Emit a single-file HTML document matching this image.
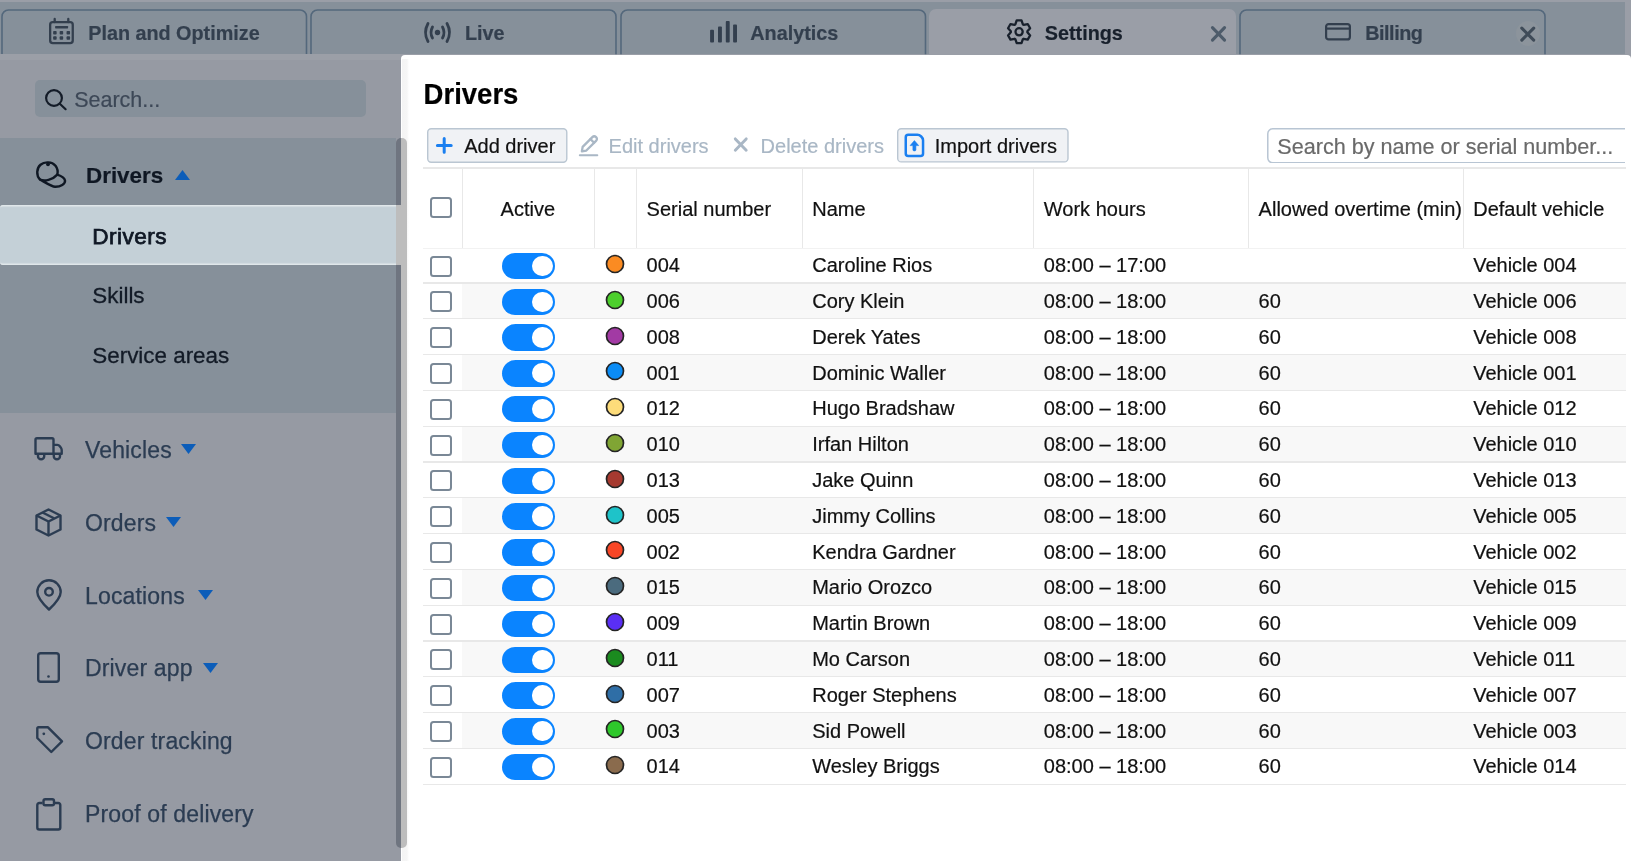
<!DOCTYPE html>
<html><head><meta charset="utf-8">
<style>
*{box-sizing:border-box;margin:0;padding:0}
html,body{width:1631px;height:861px;overflow:hidden}
body{will-change:transform;position:relative;background:#9a9ea7;font-family:"Liberation Sans",sans-serif;color:#000}
.abs{position:absolute}
.t{position:absolute;white-space:nowrap;line-height:1;-webkit-text-stroke:0.2px currentColor}
svg{overflow:visible}
</style></head><body>
<div class="abs" style="left:0.00px;top:1.50px;width:1625.00px;height:52.80px;background:#86909a"></div>
<svg class="abs" style="left:2.00px;top:0.00px;" width="304.5" height="55" viewBox="0 0 304.5 55"><path d="M0 54.3V16.5A6.5 6.5 0 0 1 6.5 10H298.0A6.5 6.5 0 0 1 304.5 16.5V54.3" fill="none" stroke="#54687c" stroke-width="1.6"/></svg>
<svg class="abs" style="left:311.00px;top:0.00px;" width="305" height="55" viewBox="0 0 305 55"><path d="M0 54.3V16.5A6.5 6.5 0 0 1 6.5 10H298.5A6.5 6.5 0 0 1 305 16.5V54.3" fill="none" stroke="#54687c" stroke-width="1.6"/></svg>
<svg class="abs" style="left:621.00px;top:0.00px;" width="304.5" height="55" viewBox="0 0 304.5 55"><path d="M0 54.3V16.5A6.5 6.5 0 0 1 6.5 10H298.0A6.5 6.5 0 0 1 304.5 16.5V54.3" fill="none" stroke="#54687c" stroke-width="1.6"/></svg>
<div class="abs" style="left:929.25px;top:8.75px;width:306.50px;height:45.55px;background:#9a9ea7;border-radius:7px 7px 0 0"></div>
<svg class="abs" style="left:1240.00px;top:0.00px;" width="305" height="55" viewBox="0 0 305 55"><path d="M0 54.3V16.5A6.5 6.5 0 0 1 6.5 10H298.5A6.5 6.5 0 0 1 305 16.5V54.3" fill="none" stroke="#54687c" stroke-width="1.6"/></svg>
<svg class="abs" style="left:44.00px;top:14.00px;" width="36" height="36" viewBox="0 0 36 36"><g fill="none" stroke="#333f4e" stroke-width="2.3" stroke-linecap="round"><rect x="6.15" y="8.05" width="22.6" height="21.1" rx="2.6"/><path d="M10.7 5V8M24.3 5V8"/></g><g fill="#333f4e"><rect x="11.1" y="11.9" width="13" height="2.5" rx="0.6"/><rect x="9.15" y="17.05" width="3.5" height="3.5" rx="0.8"/><rect x="15.65" y="17.05" width="3.5" height="3.5" rx="0.8"/><rect x="22.55" y="17.05" width="3.5" height="3.5" rx="0.8"/><rect x="9.15" y="22.35" width="3.5" height="3.5" rx="0.8"/><rect x="15.65" y="22.35" width="3.5" height="3.5" rx="0.8"/><rect x="22.55" y="22.35" width="3.5" height="3.5" rx="0.8"/></g></svg>
<div class="t" style="left:88.20px;top:24.00px;font-size:19.8px;color:#333f4e;font-weight:bold;">Plan and Optimize</div>
<svg class="abs" style="left:424.30px;top:21.50px;" width="27" height="21" viewBox="0 0 27 21"><g fill="none" stroke="#333f4e" stroke-width="2.8" stroke-linecap="round"><path d="M4 1.5 Q-1 10.5 4 19.5"/><path d="M23 1.5 Q28 10.5 23 19.5"/><path d="M8.5 5 Q5.5 10.5 8.5 16"/><path d="M18.5 5 Q21.5 10.5 18.5 16"/></g><circle cx="13.5" cy="10.5" r="2.7" fill="#333f4e"/></svg>
<div class="t" style="left:465.00px;top:24.00px;font-size:19.8px;color:#333f4e;font-weight:bold;">Live</div>
<svg class="abs" style="left:710.00px;top:21.30px;" width="27" height="21.5" viewBox="0 0 27 21.5"><g fill="#333f4e"><rect x="0.1" y="8.8" width="3.9" height="12.7" rx="0.9"/><rect x="8" y="5.4" width="3.9" height="16.1" rx="0.9"/><rect x="15.8" y="0" width="3.9" height="21.5" rx="0.9"/><rect x="23.1" y="3.4" width="3.9" height="18.1" rx="0.9"/></g></svg>
<div class="t" style="left:750.30px;top:24.00px;font-size:19.8px;color:#333f4e;font-weight:bold;">Analytics</div>
<svg class="abs" style="left:1005.50px;top:19.00px;" width="26" height="26" viewBox="0 0 26 26"><g fill="none" stroke="#18202c" stroke-width="2.3" stroke-linejoin="round"><path d="M9.33 5.40 L10.69 1.45 L15.51 1.45 L16.87 5.40 L17.62 5.84 L21.72 5.04 L24.13 9.22 L21.39 12.37 L21.39 13.23 L24.13 16.38 L21.72 20.56 L17.62 19.76 L16.87 20.20 L15.51 24.15 L10.69 24.15 L9.33 20.20 L8.58 19.76 L4.48 20.56 L2.07 16.38 L4.81 13.23 L4.81 12.37 L2.07 9.22 L4.48 5.04 L8.58 5.84Z"/><circle cx="13.1" cy="12.8" r="3.6"/></g></svg>
<div class="t" style="left:1044.80px;top:24.00px;font-size:19.8px;color:#18202c;font-weight:bold;">Settings</div>
<svg class="abs" style="left:1200.00px;top:18.00px;" width="40" height="32" viewBox="0 0 40 32"><path d="M12.45 9.65L24.55 22.15M24.55 9.65L12.45 22.15" stroke="#4d5b6a" stroke-width="3.1" stroke-linecap="round"/></svg>
<svg class="abs" style="left:1324.50px;top:23.00px;" width="26" height="17.5" viewBox="0 0 26 17.5"><g fill="none" stroke="#333f4e" stroke-width="2.2"><rect x="1.1" y="1.1" width="23.8" height="15.3" rx="2.5"/><path d="M1.1 5.6H24.9"/></g></svg>
<div class="t" style="left:1365.20px;top:24.00px;font-size:19.8px;color:#333f4e;font-weight:bold;letter-spacing:-0.45px">Billing</div>
<div class="abs" style="left:1515.50px;top:20.70px;width:24.50px;height:25.30px;background:#8c949c;border-radius:50%"></div>
<svg class="abs" style="left:1510.00px;top:18.00px;" width="40" height="32" viewBox="0 0 40 32"><path d="M11.8 10.2L23.7 22.1M23.7 10.2L11.8 22.1" stroke="#3f4b58" stroke-width="3.1" stroke-linecap="round"/></svg>
<div class="abs" style="left:0.00px;top:54.30px;width:401.00px;height:806.70px;background:#969aa3"></div>
<div class="abs" style="left:0.00px;top:54.30px;width:401.00px;height:6.20px;background:#9b9fa7"></div>
<div class="abs" style="left:34.50px;top:80.30px;width:331.00px;height:37.20px;background:#86909a;border-radius:5px"></div>
<svg class="abs" style="left:45.00px;top:88.70px;" width="22" height="21" viewBox="0 0 22 21"><g fill="none" stroke="#141c28" stroke-width="2.2" stroke-linecap="round"><circle cx="9" cy="9" r="7.9"/><path d="M14.8 14.8L20.6 20.2"/></g></svg>
<div class="t" style="left:74.20px;top:90.00px;font-size:21.5px;color:#3d4857;">Search...</div>
<div class="abs" style="left:0.00px;top:137.60px;width:396.30px;height:275.20px;background:#86909a"></div>
<svg class="abs" style="left:32.00px;top:156.00px;" width="40" height="36" viewBox="0 0 40 36"><g fill="none" stroke="#0f1723" stroke-width="2.4" stroke-linejoin="round" stroke-linecap="round"><path d="M8 23.5C4 19.5 4.5 12 8.5 8.7C12.5 5.3 20 5.5 23.5 9.8C25.5 12.5 26 16 25.3 18.6"/><path d="M8 23.5C12.5 25.5 20.5 24 25.3 18.6C29.5 20 32.5 22 33 24.5C33.5 28 28.5 31 23 30.8C20 30.7 18.5 29.5 8 23.5Z"/></g><circle cx="16" cy="8.3" r="1.9" fill="#0f1723"/></svg>
<div class="t" style="left:86.00px;top:165.00px;font-size:22.4px;color:#0f1723;font-weight:bold;">Drivers</div>
<svg class="abs" style="left:174.70px;top:170.00px;" width="15" height="10" viewBox="0 0 15 10"><path d="M7.5 0L15 10H0Z" fill="#0c5db9"/></svg>
<div class="abs" style="left:0.00px;top:204.80px;width:396.30px;height:60.40px;background:#c4d0d7;border-radius:3px 0 0 3px;box-shadow:inset 0 2.5px 1px -1px #e2e8eb,inset 0 -2.5px 1px -1px #e2e8eb"></div>
<div class="t" style="left:92.30px;top:226.00px;font-size:22.6px;color:#0f1724;letter-spacing:0.45px;-webkit-text-stroke:0.75px #0f1724">Drivers</div>
<div class="t" style="left:92.30px;top:285.00px;font-size:22.4px;color:#131b27;-webkit-text-stroke:0.3px #131b27">Skills</div>
<div class="t" style="left:92.30px;top:345.00px;font-size:22.4px;color:#131b27;-webkit-text-stroke:0.3px #131b27">Service areas</div>
<div class="abs" style="left:396.30px;top:137.90px;width:4.70px;height:710.10px;background:#6f7580;border-radius:5px 0 0 5px"></div>
<div class="abs" style="left:396.30px;top:204.80px;width:4.70px;height:60.40px;background:#bdbdbd"></div>
<div class="t" style="left:85.00px;top:439.00px;font-size:23px;color:#2b3c52;letter-spacing:0.15px;-webkit-text-stroke:0.25px #2b3c52">Vehicles</div>
<svg class="abs" style="left:181.00px;top:444.40px;" width="15" height="10" viewBox="0 0 15 10"><path d="M0 0H15L7.5 10Z" fill="#0c5db9"/></svg>
<div class="t" style="left:85.00px;top:512.00px;font-size:23px;color:#2b3c52;letter-spacing:0.15px;-webkit-text-stroke:0.25px #2b3c52">Orders</div>
<svg class="abs" style="left:166.00px;top:517.10px;" width="15" height="10" viewBox="0 0 15 10"><path d="M0 0H15L7.5 10Z" fill="#0c5db9"/></svg>
<div class="t" style="left:85.00px;top:585.00px;font-size:23px;color:#2b3c52;letter-spacing:0.15px;-webkit-text-stroke:0.25px #2b3c52">Locations</div>
<svg class="abs" style="left:198.00px;top:589.80px;" width="15" height="10" viewBox="0 0 15 10"><path d="M0 0H15L7.5 10Z" fill="#0c5db9"/></svg>
<div class="t" style="left:85.00px;top:657.00px;font-size:23px;color:#2b3c52;letter-spacing:0.15px;-webkit-text-stroke:0.25px #2b3c52">Driver app</div>
<svg class="abs" style="left:203.00px;top:662.60px;" width="15" height="10" viewBox="0 0 15 10"><path d="M0 0H15L7.5 10Z" fill="#0c5db9"/></svg>
<div class="t" style="left:85.00px;top:730.00px;font-size:23px;color:#2b3c52;letter-spacing:0.15px;-webkit-text-stroke:0.25px #2b3c52">Order tracking</div>
<div class="t" style="left:85.00px;top:803.00px;font-size:23px;color:#2b3c52;letter-spacing:0.15px;-webkit-text-stroke:0.25px #2b3c52">Proof of delivery</div>
<svg class="abs" style="left:30.00px;top:432.00px;" width="38" height="34" viewBox="0 0 38 34"><g fill="none" stroke="#2b3c52" stroke-width="2.4" stroke-linejoin="round"><path d="M7 6.3H22A1.5 1.5 0 0 1 23.5 7.8V21.7H5.5V7.8A1.5 1.5 0 0 1 7 6.3Z"/><path d="M23.5 12.9H27.3Q28.8 12.9 29.8 14.2L31 15.9Q31.7 16.9 31.7 18.2V21.7H23.5"/><path d="M8 21.7V24.2A3.1 3.1 0 0 0 14.2 24.2V21.7M23.8 21.7V24.2A3.1 3.1 0 0 0 30 24.2V21.7"/></g></svg>
<svg class="abs" style="left:35.40px;top:507.80px;" width="27" height="29" viewBox="0 0 27 29"><g fill="none" stroke="#2b3c52" stroke-width="2.4" stroke-linejoin="round"><path d="M13.5 1.5L25.5 7.5V21.5L13.5 27.5L1.5 21.5V7.5Z"/><path d="M1.5 7.5L13.5 13.5L25.5 7.5M13.5 13.5V27.5M7.5 4.5L19.5 10.5"/></g></svg>
<svg class="abs" style="left:36.30px;top:579.80px;" width="26" height="31" viewBox="0 0 26 31"><g fill="none" stroke="#2b3c52" stroke-width="2.4" stroke-linejoin="round"><path d="M13 29.5C6 23 1.3 17.5 1.3 12A11.7 11.7 0 0 1 24.7 12C24.7 17.5 20 23 13 29.5Z"/><circle cx="13" cy="11.8" r="3.8"/></g></svg>
<svg class="abs" style="left:37.30px;top:652.30px;" width="23" height="31" viewBox="0 0 23 31"><g fill="none" stroke="#2b3c52" stroke-width="2.4"><rect x="1.2" y="1.2" width="20.6" height="28.6" rx="2.5"/></g><circle cx="11.5" cy="24.5" r="1.3" fill="#2b3c52"/></svg>
<svg class="abs" style="left:35.90px;top:726.20px;" width="27.5" height="27.5" viewBox="0 0 27.5 27.5"><g fill="none" stroke="#2b3c52" stroke-width="2.4" stroke-linejoin="round"><path d="M1.3 2.3a1 1 0 0 1 1-1H12L26 15.3 15.3 26 1.3 12Z"/></g><circle cx="7.8" cy="7.8" r="1.4" fill="#2b3c52"/></svg>
<svg class="abs" style="left:35.90px;top:797.50px;" width="25.5" height="32" viewBox="0 0 25.5 32"><g fill="none" stroke="#2b3c52" stroke-width="2.4" stroke-linejoin="round"><path d="M6.5 5H3.3a2 2 0 0 0-2 2v22.5a2 2 0 0 0 2 2h19a2 2 0 0 0 2-2V7a2 2 0 0 0-2-2H19"/><rect x="7.5" y="1.2" width="10.5" height="6" rx="1.8"/></g></svg>
<div class="abs" style="left:401.00px;top:55.00px;width:1230.00px;height:808.50px;background:#fff;border-radius:4px"></div>
<div class="abs" style="left:402.00px;top:59.00px;width:7.00px;height:802.00px;background:linear-gradient(to right,#f4f4f4,#f6f6f6 70%,#fff)"></div>
<div class="abs" style="left:401.00px;top:137.90px;width:5.70px;height:710.10px;background:#bdbdbd;border-radius:0 5px 5px 0"></div>
<div class="t" style="left:423.60px;top:81.00px;font-size:27.5px;color:#000;font-weight:bold;transform:scaleY(1.07);transform-origin:0 23px">Drivers</div>
<svg class="abs" style="left:426.60px;top:127.70px;" width="140.5" height="34.9" viewBox="0 0 140.50 34.90"><rect x="0.7" y="0.7" width="139.10" height="33.50" rx="3.5" fill="#f0f2f5" stroke="#bac6d2" stroke-width="1.4"/></svg>
<svg class="abs" style="left:428.00px;top:128.00px;" width="34" height="34" viewBox="0 0 34 34"><g stroke="#1a7ff0" stroke-width="3" stroke-linecap="round"><path d="M16.2 10.4V24.2M9.4 17.4H23.2"/></g></svg>
<div class="t" style="left:464.20px;top:136.00px;font-size:20px;color:#111;">Add driver</div>
<svg class="abs" style="left:570.00px;top:128.00px;" width="40" height="34" viewBox="0 0 40 34"><g fill="none" stroke="#a9b7c5" stroke-width="2.3" stroke-linejoin="round" stroke-linecap="round"><path d="M11.9 23.3L12.66 18.86L22.36 9.16Q24.2 7.3 26.04 9.16Q27.9 11 26.04 12.84L16.34 22.54Z"/><path d="M20.5 11.1L24.1 14.7"/></g><path d="M9.8 27.3H27.3" stroke="#a9b7c5" stroke-width="2" stroke-linecap="round"/></svg>
<div class="t" style="left:608.60px;top:136.00px;font-size:20px;color:#a9b7c5;">Edit drivers</div>
<svg class="abs" style="left:725.00px;top:128.00px;" width="35" height="34" viewBox="0 0 35 34"><path d="M10.3 10.9L21.2 22.3M21.2 10.9L10.3 22.3" stroke="#a9b7c5" stroke-width="2.9" stroke-linecap="round"/></svg>
<div class="t" style="left:760.60px;top:136.00px;font-size:20px;color:#a9b7c5;">Delete drivers</div>
<svg class="abs" style="left:897.20px;top:127.90px;" width="171.7" height="34.6" viewBox="0 0 171.70 34.60"><rect x="0.7" y="0.7" width="170.30" height="33.20" rx="3.5" fill="#f0f2f5" stroke="#bac6d2" stroke-width="1.4"/></svg>
<svg class="abs" style="left:898.00px;top:128.00px;" width="34" height="34" viewBox="0 0 34 34"><path d="M10.25 6.75H19.4C22 6.75 25.05 9.6 25.05 12.2V25.45A2.5 2.5 0 0 1 22.55 27.95H10.25A2.5 2.5 0 0 1 7.75 25.45V9.25A2.5 2.5 0 0 1 10.25 6.75Z" fill="none" stroke="#1a7ff0" stroke-width="2.5" stroke-linejoin="round"/><path d="M16.4 12.6L20.7 17.6H17.9V21.9Q17.9 22.9 16.4 22.9Q14.9 22.9 14.9 21.9V17.6H12.1Z" fill="#1a7ff0" stroke="#1a7ff0" stroke-width="0.6" stroke-linejoin="round"/></svg>
<div class="t" style="left:934.70px;top:136.00px;font-size:20px;color:#111;">Import drivers</div>
<div class="abs" style="left:1267.3px;top:127.7px;width:358.2px;height:35.6px;overflow:hidden"><svg class="abs" style="left:0.00px;top:0.00px;" width="400.0" height="35.6" viewBox="0 0 400.00 35.60"><rect x="0.75" y="0.75" width="398.50" height="34.10" rx="5" fill="#fff" stroke="#b8c5d3" stroke-width="1.5"/></svg>
<div class="t" style="left:10.00px;top:8.00px;font-size:21.6px;color:#6a6a6a;">Search by name or serial number...</div>
</div>
<div class="abs" style="left:423.00px;top:167.30px;width:1202.50px;height:1.30px;background:#e8e8e8"></div>
<div class="abs" style="left:461.50px;top:168.60px;width:1.10px;height:80.00px;background:#e8e8e8"></div>
<div class="abs" style="left:594.00px;top:168.60px;width:1.10px;height:80.00px;background:#e8e8e8"></div>
<div class="abs" style="left:635.50px;top:168.60px;width:1.10px;height:80.00px;background:#e8e8e8"></div>
<div class="abs" style="left:801.90px;top:168.60px;width:1.10px;height:80.00px;background:#e8e8e8"></div>
<div class="abs" style="left:1032.50px;top:168.60px;width:1.10px;height:80.00px;background:#e8e8e8"></div>
<div class="abs" style="left:1247.50px;top:168.60px;width:1.10px;height:80.00px;background:#e8e8e8"></div>
<div class="abs" style="left:1462.90px;top:168.60px;width:1.10px;height:80.00px;background:#e8e8e8"></div>
<div class="abs" style="left:423.00px;top:247.60px;width:1202.50px;height:1.50px;background:#f2f2f2"></div>
<div class="abs" style="left:429.80px;top:197.00px;width:21.90px;height:21.20px;border:2px solid #7a8896;border-radius:3.5px;background:#fff"></div>
<div class="t" style="left:500.60px;top:199.00px;font-size:20px;color:#111;">Active</div>
<div class="t" style="left:646.60px;top:199.00px;font-size:20px;color:#111;">Serial number</div>
<div class="t" style="left:812.20px;top:199.00px;font-size:20px;color:#111;">Name</div>
<div class="t" style="left:1043.80px;top:199.00px;font-size:20px;color:#111;">Work hours</div>
<div class="t" style="left:1258.60px;top:199.00px;font-size:20px;color:#111;">Allowed overtime (min)</div>
<div class="t" style="left:1473.20px;top:199.00px;font-size:20px;color:#111;">Default vehicle</div>
<div class="abs" style="left:423.00px;top:282.49px;width:1202.50px;height:1.20px;background:#e8e8e8"></div>
<div class="abs" style="left:429.80px;top:255.60px;width:21.90px;height:21.00px;border:2px solid #7a8896;border-radius:3.5px;background:#fff"></div>
<div class="abs" style="left:502.40px;top:252.80px;width:53.10px;height:26.40px;background:#0a84ff;border-radius:14px"></div>
<div class="abs" style="left:532.30px;top:255.90px;width:20.30px;height:20.20px;background:#fff;border-radius:50%"></div>
<svg class="abs" style="left:604.50px;top:254.00px;" width="20" height="20" viewBox="0 0 20 20"><circle cx="10" cy="10" r="8.5" fill="#fb8b22" stroke="#242424" stroke-width="1.7"/></svg>
<div class="t" style="left:646.60px;top:255.00px;font-size:20px;color:#111;">004</div>
<div class="t" style="left:812.20px;top:255.00px;font-size:20px;color:#111;">Caroline Rios</div>
<div class="t" style="left:1043.80px;top:255.00px;font-size:20px;color:#111;">08:00 – 17:00</div>
<div class="t" style="left:1473.20px;top:255.00px;font-size:20px;color:#111;">Vehicle 004</div>
<div class="abs" style="left:462.00px;top:283.69px;width:1163.50px;height:34.59px;background:#f8f8f8"></div>
<div class="abs" style="left:423.00px;top:318.29px;width:1202.50px;height:1.20px;background:#e8e8e8"></div>
<div class="abs" style="left:429.80px;top:291.39px;width:21.90px;height:21.00px;border:2px solid #7a8896;border-radius:3.5px;background:#fff"></div>
<div class="abs" style="left:502.40px;top:288.59px;width:53.10px;height:26.40px;background:#0a84ff;border-radius:14px"></div>
<div class="abs" style="left:532.30px;top:291.69px;width:20.30px;height:20.20px;background:#fff;border-radius:50%"></div>
<svg class="abs" style="left:604.50px;top:289.79px;" width="20" height="20" viewBox="0 0 20 20"><circle cx="10" cy="10" r="8.5" fill="#4ccf2c" stroke="#242424" stroke-width="1.7"/></svg>
<div class="t" style="left:646.60px;top:291.00px;font-size:20px;color:#111;">006</div>
<div class="t" style="left:812.20px;top:291.00px;font-size:20px;color:#111;">Cory Klein</div>
<div class="t" style="left:1043.80px;top:291.00px;font-size:20px;color:#111;">08:00 – 18:00</div>
<div class="t" style="left:1258.60px;top:291.00px;font-size:20px;color:#111;">60</div>
<div class="t" style="left:1473.20px;top:291.00px;font-size:20px;color:#111;">Vehicle 006</div>
<div class="abs" style="left:423.00px;top:354.08px;width:1202.50px;height:1.20px;background:#e8e8e8"></div>
<div class="abs" style="left:429.80px;top:327.18px;width:21.90px;height:21.00px;border:2px solid #7a8896;border-radius:3.5px;background:#fff"></div>
<div class="abs" style="left:502.40px;top:324.38px;width:53.10px;height:26.40px;background:#0a84ff;border-radius:14px"></div>
<div class="abs" style="left:532.30px;top:327.48px;width:20.30px;height:20.20px;background:#fff;border-radius:50%"></div>
<svg class="abs" style="left:604.50px;top:325.58px;" width="20" height="20" viewBox="0 0 20 20"><circle cx="10" cy="10" r="8.5" fill="#a23aa4" stroke="#242424" stroke-width="1.7"/></svg>
<div class="t" style="left:646.60px;top:327.00px;font-size:20px;color:#111;">008</div>
<div class="t" style="left:812.20px;top:327.00px;font-size:20px;color:#111;">Derek Yates</div>
<div class="t" style="left:1043.80px;top:327.00px;font-size:20px;color:#111;">08:00 – 18:00</div>
<div class="t" style="left:1258.60px;top:327.00px;font-size:20px;color:#111;">60</div>
<div class="t" style="left:1473.20px;top:327.00px;font-size:20px;color:#111;">Vehicle 008</div>
<div class="abs" style="left:462.00px;top:355.28px;width:1163.50px;height:34.59px;background:#f8f8f8"></div>
<div class="abs" style="left:423.00px;top:389.87px;width:1202.50px;height:1.20px;background:#e8e8e8"></div>
<div class="abs" style="left:429.80px;top:362.98px;width:21.90px;height:21.00px;border:2px solid #7a8896;border-radius:3.5px;background:#fff"></div>
<div class="abs" style="left:502.40px;top:360.18px;width:53.10px;height:26.40px;background:#0a84ff;border-radius:14px"></div>
<div class="abs" style="left:532.30px;top:363.28px;width:20.30px;height:20.20px;background:#fff;border-radius:50%"></div>
<svg class="abs" style="left:604.50px;top:361.38px;" width="20" height="20" viewBox="0 0 20 20"><circle cx="10" cy="10" r="8.5" fill="#0b8cf5" stroke="#242424" stroke-width="1.7"/></svg>
<div class="t" style="left:646.60px;top:363.00px;font-size:20px;color:#111;">001</div>
<div class="t" style="left:812.20px;top:363.00px;font-size:20px;color:#111;">Dominic Waller</div>
<div class="t" style="left:1043.80px;top:363.00px;font-size:20px;color:#111;">08:00 – 18:00</div>
<div class="t" style="left:1258.60px;top:363.00px;font-size:20px;color:#111;">60</div>
<div class="t" style="left:1473.20px;top:363.00px;font-size:20px;color:#111;">Vehicle 001</div>
<div class="abs" style="left:423.00px;top:425.67px;width:1202.50px;height:1.20px;background:#e8e8e8"></div>
<div class="abs" style="left:429.80px;top:398.77px;width:21.90px;height:21.00px;border:2px solid #7a8896;border-radius:3.5px;background:#fff"></div>
<div class="abs" style="left:502.40px;top:395.97px;width:53.10px;height:26.40px;background:#0a84ff;border-radius:14px"></div>
<div class="abs" style="left:532.30px;top:399.07px;width:20.30px;height:20.20px;background:#fff;border-radius:50%"></div>
<svg class="abs" style="left:604.50px;top:397.17px;" width="20" height="20" viewBox="0 0 20 20"><circle cx="10" cy="10" r="8.5" fill="#fddc7a" stroke="#242424" stroke-width="1.7"/></svg>
<div class="t" style="left:646.60px;top:398.00px;font-size:20px;color:#111;">012</div>
<div class="t" style="left:812.20px;top:398.00px;font-size:20px;color:#111;">Hugo Bradshaw</div>
<div class="t" style="left:1043.80px;top:398.00px;font-size:20px;color:#111;">08:00 – 18:00</div>
<div class="t" style="left:1258.60px;top:398.00px;font-size:20px;color:#111;">60</div>
<div class="t" style="left:1473.20px;top:398.00px;font-size:20px;color:#111;">Vehicle 012</div>
<div class="abs" style="left:462.00px;top:426.87px;width:1163.50px;height:34.59px;background:#f8f8f8"></div>
<div class="abs" style="left:423.00px;top:461.46px;width:1202.50px;height:1.20px;background:#e8e8e8"></div>
<div class="abs" style="left:429.80px;top:434.56px;width:21.90px;height:21.00px;border:2px solid #7a8896;border-radius:3.5px;background:#fff"></div>
<div class="abs" style="left:502.40px;top:431.76px;width:53.10px;height:26.40px;background:#0a84ff;border-radius:14px"></div>
<div class="abs" style="left:532.30px;top:434.86px;width:20.30px;height:20.20px;background:#fff;border-radius:50%"></div>
<svg class="abs" style="left:604.50px;top:432.96px;" width="20" height="20" viewBox="0 0 20 20"><circle cx="10" cy="10" r="8.5" fill="#80a534" stroke="#242424" stroke-width="1.7"/></svg>
<div class="t" style="left:646.60px;top:434.00px;font-size:20px;color:#111;">010</div>
<div class="t" style="left:812.20px;top:434.00px;font-size:20px;color:#111;">Irfan Hilton</div>
<div class="t" style="left:1043.80px;top:434.00px;font-size:20px;color:#111;">08:00 – 18:00</div>
<div class="t" style="left:1258.60px;top:434.00px;font-size:20px;color:#111;">60</div>
<div class="t" style="left:1473.20px;top:434.00px;font-size:20px;color:#111;">Vehicle 010</div>
<div class="abs" style="left:423.00px;top:497.25px;width:1202.50px;height:1.20px;background:#e8e8e8"></div>
<div class="abs" style="left:429.80px;top:470.36px;width:21.90px;height:21.00px;border:2px solid #7a8896;border-radius:3.5px;background:#fff"></div>
<div class="abs" style="left:502.40px;top:467.56px;width:53.10px;height:26.40px;background:#0a84ff;border-radius:14px"></div>
<div class="abs" style="left:532.30px;top:470.66px;width:20.30px;height:20.20px;background:#fff;border-radius:50%"></div>
<svg class="abs" style="left:604.50px;top:468.76px;" width="20" height="20" viewBox="0 0 20 20"><circle cx="10" cy="10" r="8.5" fill="#a63a30" stroke="#242424" stroke-width="1.7"/></svg>
<div class="t" style="left:646.60px;top:470.00px;font-size:20px;color:#111;">013</div>
<div class="t" style="left:812.20px;top:470.00px;font-size:20px;color:#111;">Jake Quinn</div>
<div class="t" style="left:1043.80px;top:470.00px;font-size:20px;color:#111;">08:00 – 18:00</div>
<div class="t" style="left:1258.60px;top:470.00px;font-size:20px;color:#111;">60</div>
<div class="t" style="left:1473.20px;top:470.00px;font-size:20px;color:#111;">Vehicle 013</div>
<div class="abs" style="left:462.00px;top:498.45px;width:1163.50px;height:34.59px;background:#f8f8f8"></div>
<div class="abs" style="left:423.00px;top:533.05px;width:1202.50px;height:1.20px;background:#e8e8e8"></div>
<div class="abs" style="left:429.80px;top:506.15px;width:21.90px;height:21.00px;border:2px solid #7a8896;border-radius:3.5px;background:#fff"></div>
<div class="abs" style="left:502.40px;top:503.35px;width:53.10px;height:26.40px;background:#0a84ff;border-radius:14px"></div>
<div class="abs" style="left:532.30px;top:506.45px;width:20.30px;height:20.20px;background:#fff;border-radius:50%"></div>
<svg class="abs" style="left:604.50px;top:504.55px;" width="20" height="20" viewBox="0 0 20 20"><circle cx="10" cy="10" r="8.5" fill="#1ec3c9" stroke="#242424" stroke-width="1.7"/></svg>
<div class="t" style="left:646.60px;top:506.00px;font-size:20px;color:#111;">005</div>
<div class="t" style="left:812.20px;top:506.00px;font-size:20px;color:#111;">Jimmy Collins</div>
<div class="t" style="left:1043.80px;top:506.00px;font-size:20px;color:#111;">08:00 – 18:00</div>
<div class="t" style="left:1258.60px;top:506.00px;font-size:20px;color:#111;">60</div>
<div class="t" style="left:1473.20px;top:506.00px;font-size:20px;color:#111;">Vehicle 005</div>
<div class="abs" style="left:423.00px;top:568.84px;width:1202.50px;height:1.20px;background:#e8e8e8"></div>
<div class="abs" style="left:429.80px;top:541.94px;width:21.90px;height:21.00px;border:2px solid #7a8896;border-radius:3.5px;background:#fff"></div>
<div class="abs" style="left:502.40px;top:539.14px;width:53.10px;height:26.40px;background:#0a84ff;border-radius:14px"></div>
<div class="abs" style="left:532.30px;top:542.24px;width:20.30px;height:20.20px;background:#fff;border-radius:50%"></div>
<svg class="abs" style="left:604.50px;top:540.34px;" width="20" height="20" viewBox="0 0 20 20"><circle cx="10" cy="10" r="8.5" fill="#f84626" stroke="#242424" stroke-width="1.7"/></svg>
<div class="t" style="left:646.60px;top:542.00px;font-size:20px;color:#111;">002</div>
<div class="t" style="left:812.20px;top:542.00px;font-size:20px;color:#111;">Kendra Gardner</div>
<div class="t" style="left:1043.80px;top:542.00px;font-size:20px;color:#111;">08:00 – 18:00</div>
<div class="t" style="left:1258.60px;top:542.00px;font-size:20px;color:#111;">60</div>
<div class="t" style="left:1473.20px;top:542.00px;font-size:20px;color:#111;">Vehicle 002</div>
<div class="abs" style="left:462.00px;top:570.04px;width:1163.50px;height:34.59px;background:#f8f8f8"></div>
<div class="abs" style="left:423.00px;top:604.63px;width:1202.50px;height:1.20px;background:#e8e8e8"></div>
<div class="abs" style="left:429.80px;top:577.74px;width:21.90px;height:21.00px;border:2px solid #7a8896;border-radius:3.5px;background:#fff"></div>
<div class="abs" style="left:502.40px;top:574.94px;width:53.10px;height:26.40px;background:#0a84ff;border-radius:14px"></div>
<div class="abs" style="left:532.30px;top:578.04px;width:20.30px;height:20.20px;background:#fff;border-radius:50%"></div>
<svg class="abs" style="left:604.50px;top:576.14px;" width="20" height="20" viewBox="0 0 20 20"><circle cx="10" cy="10" r="8.5" fill="#4b6b7e" stroke="#242424" stroke-width="1.7"/></svg>
<div class="t" style="left:646.60px;top:577.00px;font-size:20px;color:#111;">015</div>
<div class="t" style="left:812.20px;top:577.00px;font-size:20px;color:#111;">Mario Orozco</div>
<div class="t" style="left:1043.80px;top:577.00px;font-size:20px;color:#111;">08:00 – 18:00</div>
<div class="t" style="left:1258.60px;top:577.00px;font-size:20px;color:#111;">60</div>
<div class="t" style="left:1473.20px;top:577.00px;font-size:20px;color:#111;">Vehicle 015</div>
<div class="abs" style="left:423.00px;top:640.43px;width:1202.50px;height:1.20px;background:#e8e8e8"></div>
<div class="abs" style="left:429.80px;top:613.53px;width:21.90px;height:21.00px;border:2px solid #7a8896;border-radius:3.5px;background:#fff"></div>
<div class="abs" style="left:502.40px;top:610.73px;width:53.10px;height:26.40px;background:#0a84ff;border-radius:14px"></div>
<div class="abs" style="left:532.30px;top:613.83px;width:20.30px;height:20.20px;background:#fff;border-radius:50%"></div>
<svg class="abs" style="left:604.50px;top:611.93px;" width="20" height="20" viewBox="0 0 20 20"><circle cx="10" cy="10" r="8.5" fill="#5a2ff4" stroke="#242424" stroke-width="1.7"/></svg>
<div class="t" style="left:646.60px;top:613.00px;font-size:20px;color:#111;">009</div>
<div class="t" style="left:812.20px;top:613.00px;font-size:20px;color:#111;">Martin Brown</div>
<div class="t" style="left:1043.80px;top:613.00px;font-size:20px;color:#111;">08:00 – 18:00</div>
<div class="t" style="left:1258.60px;top:613.00px;font-size:20px;color:#111;">60</div>
<div class="t" style="left:1473.20px;top:613.00px;font-size:20px;color:#111;">Vehicle 009</div>
<div class="abs" style="left:462.00px;top:641.63px;width:1163.50px;height:34.59px;background:#f8f8f8"></div>
<div class="abs" style="left:423.00px;top:676.22px;width:1202.50px;height:1.20px;background:#e8e8e8"></div>
<div class="abs" style="left:429.80px;top:649.32px;width:21.90px;height:21.00px;border:2px solid #7a8896;border-radius:3.5px;background:#fff"></div>
<div class="abs" style="left:502.40px;top:646.52px;width:53.10px;height:26.40px;background:#0a84ff;border-radius:14px"></div>
<div class="abs" style="left:532.30px;top:649.62px;width:20.30px;height:20.20px;background:#fff;border-radius:50%"></div>
<svg class="abs" style="left:604.50px;top:647.72px;" width="20" height="20" viewBox="0 0 20 20"><circle cx="10" cy="10" r="8.5" fill="#1b8b1f" stroke="#242424" stroke-width="1.7"/></svg>
<div class="t" style="left:646.60px;top:649.00px;font-size:20px;color:#111;">011</div>
<div class="t" style="left:812.20px;top:649.00px;font-size:20px;color:#111;">Mo Carson</div>
<div class="t" style="left:1043.80px;top:649.00px;font-size:20px;color:#111;">08:00 – 18:00</div>
<div class="t" style="left:1258.60px;top:649.00px;font-size:20px;color:#111;">60</div>
<div class="t" style="left:1473.20px;top:649.00px;font-size:20px;color:#111;">Vehicle 011</div>
<div class="abs" style="left:423.00px;top:712.01px;width:1202.50px;height:1.20px;background:#e8e8e8"></div>
<div class="abs" style="left:429.80px;top:685.12px;width:21.90px;height:21.00px;border:2px solid #7a8896;border-radius:3.5px;background:#fff"></div>
<div class="abs" style="left:502.40px;top:682.32px;width:53.10px;height:26.40px;background:#0a84ff;border-radius:14px"></div>
<div class="abs" style="left:532.30px;top:685.42px;width:20.30px;height:20.20px;background:#fff;border-radius:50%"></div>
<svg class="abs" style="left:604.50px;top:683.52px;" width="20" height="20" viewBox="0 0 20 20"><circle cx="10" cy="10" r="8.5" fill="#2f6ea6" stroke="#242424" stroke-width="1.7"/></svg>
<div class="t" style="left:646.60px;top:685.00px;font-size:20px;color:#111;">007</div>
<div class="t" style="left:812.20px;top:685.00px;font-size:20px;color:#111;">Roger Stephens</div>
<div class="t" style="left:1043.80px;top:685.00px;font-size:20px;color:#111;">08:00 – 18:00</div>
<div class="t" style="left:1258.60px;top:685.00px;font-size:20px;color:#111;">60</div>
<div class="t" style="left:1473.20px;top:685.00px;font-size:20px;color:#111;">Vehicle 007</div>
<div class="abs" style="left:462.00px;top:713.21px;width:1163.50px;height:34.59px;background:#f8f8f8"></div>
<div class="abs" style="left:423.00px;top:747.81px;width:1202.50px;height:1.20px;background:#e8e8e8"></div>
<div class="abs" style="left:429.80px;top:720.91px;width:21.90px;height:21.00px;border:2px solid #7a8896;border-radius:3.5px;background:#fff"></div>
<div class="abs" style="left:502.40px;top:718.11px;width:53.10px;height:26.40px;background:#0a84ff;border-radius:14px"></div>
<div class="abs" style="left:532.30px;top:721.21px;width:20.30px;height:20.20px;background:#fff;border-radius:50%"></div>
<svg class="abs" style="left:604.50px;top:719.31px;" width="20" height="20" viewBox="0 0 20 20"><circle cx="10" cy="10" r="8.5" fill="#2ec82b" stroke="#242424" stroke-width="1.7"/></svg>
<div class="t" style="left:646.60px;top:721.00px;font-size:20px;color:#111;">003</div>
<div class="t" style="left:812.20px;top:721.00px;font-size:20px;color:#111;">Sid Powell</div>
<div class="t" style="left:1043.80px;top:721.00px;font-size:20px;color:#111;">08:00 – 18:00</div>
<div class="t" style="left:1258.60px;top:721.00px;font-size:20px;color:#111;">60</div>
<div class="t" style="left:1473.20px;top:721.00px;font-size:20px;color:#111;">Vehicle 003</div>
<div class="abs" style="left:423.00px;top:783.60px;width:1202.50px;height:1.20px;background:#e8e8e8"></div>
<div class="abs" style="left:429.80px;top:756.70px;width:21.90px;height:21.00px;border:2px solid #7a8896;border-radius:3.5px;background:#fff"></div>
<div class="abs" style="left:502.40px;top:753.90px;width:53.10px;height:26.40px;background:#0a84ff;border-radius:14px"></div>
<div class="abs" style="left:532.30px;top:757.00px;width:20.30px;height:20.20px;background:#fff;border-radius:50%"></div>
<svg class="abs" style="left:604.50px;top:755.10px;" width="20" height="20" viewBox="0 0 20 20"><circle cx="10" cy="10" r="8.5" fill="#8a6b4d" stroke="#242424" stroke-width="1.7"/></svg>
<div class="t" style="left:646.60px;top:756.00px;font-size:20px;color:#111;">014</div>
<div class="t" style="left:812.20px;top:756.00px;font-size:20px;color:#111;">Wesley Briggs</div>
<div class="t" style="left:1043.80px;top:756.00px;font-size:20px;color:#111;">08:00 – 18:00</div>
<div class="t" style="left:1258.60px;top:756.00px;font-size:20px;color:#111;">60</div>
<div class="t" style="left:1473.20px;top:756.00px;font-size:20px;color:#111;">Vehicle 014</div>
</body></html>
